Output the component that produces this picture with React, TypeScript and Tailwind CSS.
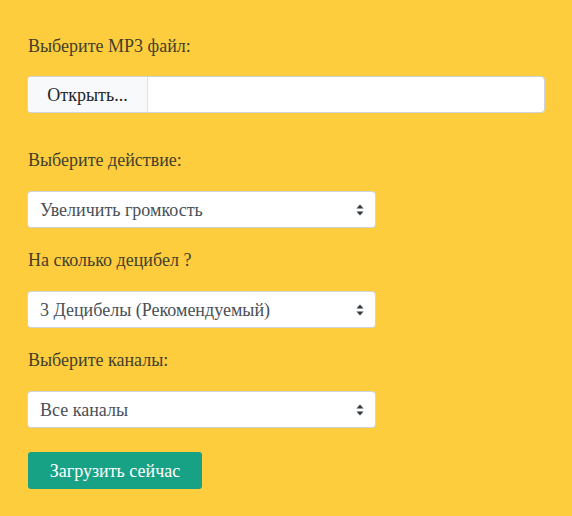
import React from "react";

function Arrows() {
  return (
    <svg width="8" height="12" viewBox="0 0 8 12" className="shrink-0">
      <path d="M4 0.5 L7.5 4.5 L0.5 4.5 Z" fill="#343a40" />
      <path d="M4 11.5 L7.5 7.5 L0.5 7.5 Z" fill="#343a40" />
    </svg>
  );
}

function Select({ value }: { value: string }) {
  return (
    <div className="w-[349px] h-[37px] bg-white border border-[#ced4da] rounded-[4px] flex items-center justify-between pl-[12px] pr-[11px] text-[#495057]">
      <span>{value}</span>
      <Arrows />
    </div>
  );
}

export default function App() {
  return (
    <div
      className="w-[572px] h-[516px] bg-[#fecd3d] pl-[27px] pt-[34px] text-[18px] leading-[24px] text-[#433f2c]"
      style={{ fontFamily: '"Liberation Serif", serif' }}
    >
      <div className="pl-[1px]">Выберите MP3 файл:</div>
      <div className="mt-[18px] w-[518px] h-[37px] bg-white border border-[#ced4da] rounded-[4px] flex overflow-hidden">
        <div className="w-[120px] bg-[#f8f9fa] border-r border-[#dee2e6] flex items-center justify-center text-[#212529]">
          Открыть...
        </div>
      </div>
      <div className="mt-[35px] pl-[1px]">Выберите действие:</div>
      <div className="mt-[19px]">
        <Select value="Увеличить громкость" />
      </div>
      <div className="mt-[20px] pl-[1px]">На сколько децибел ?</div>
      <div className="mt-[19px]">
        <Select value="3 Децибелы (Рекомендуемый)" />
      </div>
      <div className="mt-[20px] pl-[1px]">Выберите каналы:</div>
      <div className="mt-[19px]">
        <Select value="Все каналы" />
      </div>
      <div className="mt-[24px] ml-[1px] w-[174px] h-[37px] bg-[#17a185] rounded-[3px] flex items-center justify-center text-white">
        Загрузить сейчас
      </div>
    </div>
  );
}
